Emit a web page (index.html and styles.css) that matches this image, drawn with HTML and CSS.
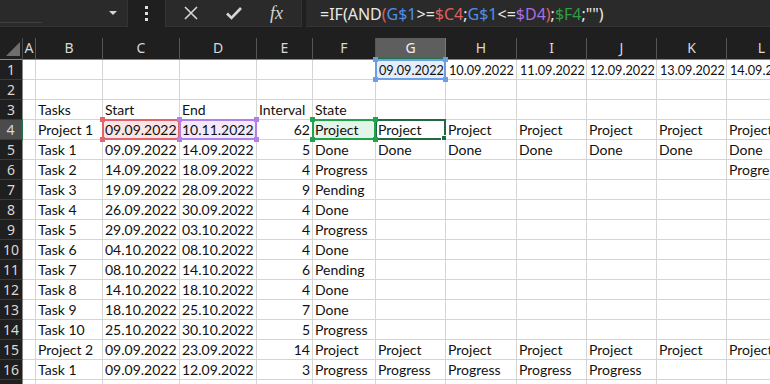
FILE: index.html
```html
<html>
  <head>
    <link rel="stylesheet" href="styles.css">
  </head>
  <body>
    <div class="toolbar">
      <div class="namebox"><span class="caret"></span></div>
      <div class="grip"><i></i><i></i><i></i></div>
      <div class="fbuttons">
        <svg class="btn" width="16" height="16" viewBox="0 0 16 16">
          <path d="M2 2 L14 14 M14 2 L2 14" stroke="#d6d6d6" stroke-width="1.6" fill="none" />
        </svg>
        <svg class="btn" width="18" height="16" viewBox="0 0 18 16">
          <path d="M2 8.5 L6.5 13 L16 3" stroke="#d6d6d6" stroke-width="2.6" fill="none" />
        </svg>
        <span class="fx">fx</span>
      </div>
      <div class="formula">=IF(AND<span class="f-red">(</span><span class="f-blue">G$1</span>&gt;=<span class="f-red">$C4</span>;<span class="f-blue">G$1</span>&lt;=<span class="f-purple">$D4</span><span class="f-red">)</span>;<span class="f-green">$F4</span>;"")</div>
    </div>

    <div class="sheet" id="sheet"></div>

    <script>
      const cols = ["A", "B", "C", "D", "E", "F", "G", "H", "I", "J", "K", "L"];
      const dates = ["09.09.2022", "10.09.2022", "11.09.2022", "12.09.2022", "13.09.2022", "14.09.2022"];
      const tasks = [
        ["Project 1", "09.09.2022", "10.11.2022", 62, "Project", 6],
        ["Task 1", "09.09.2022", "14.09.2022", 5, "Done", 6],
        ["Task 2", "14.09.2022", "18.09.2022", 4, "Progress", 0],
        ["Task 3", "19.09.2022", "28.09.2022", 9, "Pending", 0],
        ["Task 4", "26.09.2022", "30.09.2022", 4, "Done", 0],
        ["Task 5", "29.09.2022", "03.10.2022", 4, "Progress", 0],
        ["Task 6", "04.10.2022", "08.10.2022", 4, "Done", 0],
        ["Task 7", "08.10.2022", "14.10.2022", 6, "Pending", 0],
        ["Task 8", "14.10.2022", "18.10.2022", 4, "Done", 0],
        ["Task 9", "18.10.2022", "25.10.2022", 7, "Done", 0],
        ["Task 10", "25.10.2022", "30.10.2022", 5, "Progress", 0],
        ["Project 2", "09.09.2022", "23.09.2022", 14, "Project", 6],
        ["Task 1", "09.09.2022", "12.09.2022", 3, "Progress", 4],
      ];

      const rows = [];
      rows.push(["", "", "", "", "", ""].concat(dates));
      rows.push([]);
      rows.push(["", "Tasks", "Start", "End", "Interval", "State"]);
      tasks.forEach((t) => {
        const r = ["", t[0], t[1], t[2], t[3], t[4]];
        for (let i = 0; i < 6; i++) r.push(i < t[5] ? t[4] : "");
        rows.push(r);
      });
      // Task 2 shows up on 14.09 only
      rows[5][11] = "Progress";
      rows.push([]);

      const marks = {
        "G1": "ref ref-blue",
        "C4": "ref ref-red",
        "D4": "ref ref-purple",
        "F4": "ref ref-green",
        "G4": "active",
      };

      const sheet = document.getElementById("sheet");
      let html = '<div class="corner"><span></span></div>';
      cols.forEach((c) => {
        html += `<div class="colhead${c === "G" ? " on" : ""}">${c}</div>`;
      });
      rows.forEach((r, ri) => {
        const n = ri + 1;
        html += `<div class="rowhead${n === 4 ? " on" : ""}">${n}</div>`;
        cols.forEach((c, ci) => {
          const v = r[ci] === undefined ? "" : r[ci];
          let cls = "cell";
          if (n === 1) cls += " small";
          if (typeof v === "number") cls += " num";
          if (marks[c + n]) cls += " " + marks[c + n];
          html += `<div class="${cls}">${v}</div>`;
        });
      });
      sheet.innerHTML = html;
    </script>
  </body>
</html>
```

FILE: styles.css
```css
* {
  box-sizing: border-box;
}

body {
  margin: 0;
  width: 770px;
  height: 384px;
  overflow: hidden;
  background-color: #1f1f1f;
  font-family: "Noto Sans", sans-serif;
}

.toolbar {
  display: flex;
  height: 38px;
  padding-bottom: 11px;
}

.namebox {
  position: relative;
  width: 128px;
  background-color: #2a2a2a;
  border: 1px solid #333;
  border-top: 0;
  border-left: 0;
}

.namebox::after {
  content: "";
  position: absolute;
  left: 0;
  bottom: 3px;
  width: 42px;
  border-bottom: 1px solid #3e3e3e;
}

.caret {
  position: absolute;
  right: 10px;
  top: 11px;
  border-left: 4px solid transparent;
  border-right: 4px solid transparent;
  border-top: 4px solid #d6d6d6;
}

.grip {
  width: 37px;
  display: flex;
  flex-direction: column;
  align-items: center;
  justify-content: center;
  gap: 3px;
  padding-bottom: 1px;
}

.grip i {
  width: 3px;
  height: 3px;
  background-color: #e0e0e0;
}

.fbuttons {
  width: 137px;
  display: flex;
  align-items: center;
  background-color: #2a2a2a;
  border: 1px solid #333;
  border-top: 0;
  padding-left: 17px;
}

.fbuttons .btn {
  margin-right: 26px;
}

.fx {
  font-family: "Liberation Serif", serif;
  font-style: italic;
  font-size: 18px;
  color: #d6d6d6;
  margin-left: 1px;
}

.formula {
  flex: 1;
  margin-left: 4px;
  background-color: #2a2a2a;
  border-bottom: 1px solid #333;
  color: #e8e8e8;
  font-size: 16px;
  line-height: 26px;
  padding-left: 14px;
  padding-top: 1px;
  white-space: nowrap;
}

.f-red {
  color: #e0605e;
}

.f-blue {
  color: #4f8fe6;
}

.f-purple {
  color: #a76fe4;
}

.f-green {
  color: #2f9e44;
}

.sheet {
  display: grid;
  grid-template-columns: 23px 13px 67px 77px 77px 56px 63px 70px 71px 70px 70px 70px 70px;
  grid-auto-rows: 20px;
  grid-template-rows: 22px;
  width: 797px;
}

.corner {
  position: relative;
  border-right: 1px solid #4a4a4a;
  border-bottom: 1px solid #8a8a8a;
}

.corner span {
  position: absolute;
  right: 2px;
  bottom: 3px;
  border-left: 14px solid transparent;
  border-bottom: 14px solid #6e6e6e;
}

.colhead {
  color: #d8d8d8;
  font-size: 14px;
  line-height: 20px;
  text-align: center;
  border-right: 1px solid #555;
  border-bottom: 1px solid #8a8a8a;
}

.colhead.on {
  background-color: #5e5e5e;
  color: #f0f0f0;
  border-bottom: 2px solid #1e7145;
  border-right-color: #777;
}

.rowhead {
  color: #d8d8d8;
  font-size: 14px;
  line-height: 19px;
  text-align: center;
  border-bottom: 1px solid #3a3a3a;
  border-right: 1px solid #8a8a8a;
}

.rowhead.on {
  background-color: #4b4b4b;
  border-right: 2px solid #1e7145;
}

.cell {
  position: relative;
  background-color: #fff;
  border-right: 1px solid #d4d4d4;
  border-bottom: 1px solid #d4d4d4;
  font-family: "Lato", sans-serif;
  font-size: 14px;
  line-height: 20px;
  color: #111;
  padding-left: 2px;
  white-space: nowrap;
}

.cell.small {
  font-size: 12.7px;
  padding-left: 3px;
}

.num {
  text-align: right;
  padding-right: 2px;
}

.ref::before {
  content: "";
  position: absolute;
  top: -1px;
  left: -1px;
  right: -1px;
  bottom: -1px;
  border: 2px solid var(--line);
  background-color: var(--fill);
  z-index: -1;
}

.ref {
  z-index: 1;
  background-color: transparent;
}

.ref::after {
  content: "";
  position: absolute;
  top: -3px;
  left: -3px;
  right: -3px;
  bottom: -3px;
  background:
    linear-gradient(var(--line), var(--line)) left top / 5px 5px no-repeat,
    linear-gradient(var(--line), var(--line)) right top / 5px 5px no-repeat,
    linear-gradient(var(--line), var(--line)) left bottom / 5px 5px no-repeat,
    linear-gradient(var(--line), var(--line)) right bottom / 5px 5px no-repeat;
}

.ref-red {
  --line: #e2636b;
  --fill: #fbe4e5;
}

.ref-purple {
  --line: #b07fe9;
  --fill: #f2e9fc;
}

.ref-green {
  --line: #21a24c;
  --fill: #e5f4e9;
}

.ref-blue {
  --line: #6b9fe2;
  --fill: #e4edf9;
}

.active::before {
  content: "";
  position: absolute;
  top: -1px;
  left: -1px;
  right: -1px;
  bottom: -1px;
  border: 2px solid #1e6b41;
}

.active::after {
  content: "";
  position: absolute;
  right: -3px;
  bottom: -3px;
  width: 5px;
  height: 5px;
  background-color: #1e6b41;
  border: 1px solid #fff;
}
```
